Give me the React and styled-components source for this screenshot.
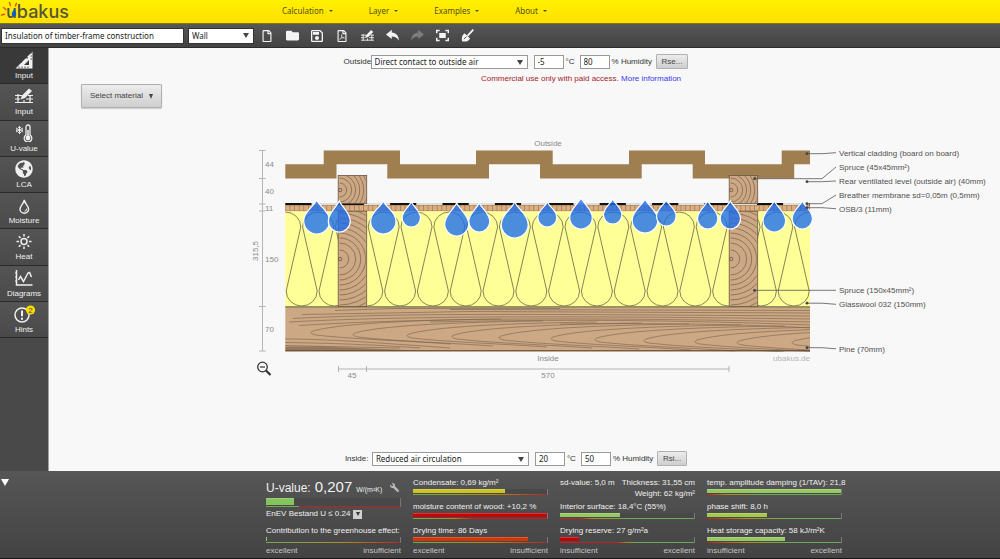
import React, { useState } from 'react';
import styled, { createGlobalStyle } from 'styled-components';
import { FaGlobeAmericas, FaRegFile, FaRegFilePdf, FaWrench, FaFolder } from 'react-icons/fa';
import { MdOutlineSave } from 'react-icons/md';

const GlobalStyle = createGlobalStyle`
  * {
    box-sizing: border-box;
  }

  body {
    margin: 0;
    font-family: 'Liberation Sans', Arial, sans-serif;
    font-size: 8px;
    line-height: 12px;
    color: #333;
    background: #f8f8f8;
  }

  button, input, select {
    font: inherit;
    color: inherit;
    margin: 0;
  }

  a {
    color: inherit;
    text-decoration: none;
  }
`;

const Page = styled.div`
  min-height: 100vh;
  display: flex;
  flex-direction: column;
`;

const Header = styled.header`
  height: 24px;
  display: flex;
  align-items: center;
  background: linear-gradient(#fff000, #ffe000);
  border-bottom: 1px solid #857600;
`;

const Logo = styled.a`
  width: 282px;
  display: block;

  svg {
    display: block;
  }
`;

const Nav = styled.nav`
  display: flex;
  gap: 36px;
  font-family: 'Noto Sans', sans-serif;
  color: #55500a;

  a {
    display: flex;
    align-items: center;
    gap: 5px;
    padding-bottom: 2px;
  }

  a::after {
    content: '';
    border: 2px solid transparent;
    border-top-color: #55500a;
    border-bottom: 0;
  }
`;

const Toolbar = styled.div`
  height: 24px;
  display: flex;
  align-items: center;
  padding-left: 1px;
  background: linear-gradient(#565656, #434343);
  border-bottom: 1px solid #2c2c2c;
`;

const TextInput = styled.input`
  width: ${props => props.$width}px;
  height: ${props => props.$height || 14}px;
  padding: 0 3px;
  border: 1px solid ${props => props.$border || '#999'};
  border-radius: 0;
  background: #fff;
  color: #222;
  font-family: 'Noto Sans', sans-serif;
`;

const SelectWrap = styled.span`
  position: relative;
  display: inline-flex;
  margin-left: ${props => props.$gap || 0}px;

  &::after {
    content: '';
    position: absolute;
    right: 5px;
    top: 5px;
    border: 3px solid transparent;
    border-top: 5px solid #444;
    border-bottom: 0;
    pointer-events: none;
  }
`;

const Select = styled.select`
  appearance: none;
  width: ${props => props.$width}px;
  height: ${props => props.$height || 14}px;
  padding: 0 3px;
  border: 1px solid ${props => props.$border || '#999'};
  border-radius: 0;
  background: #fff;
  color: #222;
  font-family: 'Noto Sans', sans-serif;
`;

const Tools = styled.div`
  display: flex;
  gap: 9px;
  margin-left: 5px;
`;

const ToolButton = styled.button`
  width: 16px;
  height: 16px;
  padding: 0;
  border: 0;
  background: none;
  display: flex;
  align-items: center;
  justify-content: center;
  color: ${props => (props.disabled ? '#7c7c7c' : '#f4f4f4')};
`;

const Body = styled.div`
  flex: 1;
  display: flex;
`;

const Sidebar = styled.nav`
  width: 49px;
  flex: none;
  background: #494949;
  border-right: 1px solid #a0a0a0;
`;

const SideList = styled.div`
  height: 290px;
  display: grid;
  grid-auto-rows: 1fr;
`;

const SideItem = styled.a`
  display: flex;
  flex-direction: column;
  align-items: center;
  padding-top: 3px;
  color: #f0f0f0;
  background: ${props => (props.$active ? '#393939' : 'linear-gradient(#545454, #4a4a4a)')};
  border-bottom: 1px solid #2a2a2a;

  svg {
    display: block;
    margin-bottom: 1px;
  }
`;

const Workspace = styled.main`
  flex: 1;
  min-width: 0;
  display: flex;
  flex-direction: column;
  padding: 6px 0 5px;
`;

const ClimateRow = styled.form`
  display: flex;
  align-items: center;
  justify-content: center;
  padding-right: 17px;
  height: 15px;
  margin-top: ${props => (props.$bottom ? 'auto' : '0')};

  label {
    white-space: nowrap;
  }
`;

const RowLabel = styled.label`
  width: 27px;
`;

const Unit = styled.label`
  width: ${props => props.$width}px;
  padding-left: 2px;
`;

const SpacedInput = styled(TextInput)`
  margin-left: ${props => props.$gap || 0}px;
`;

const GreyButton = styled.button`
  height: ${props => (props.$large ? 24 : 15)}px;
  padding: 0 ${props => (props.$large ? 8 : 5)}px;
  border: 1px solid #b0b0b0;
  border-radius: 1px;
  background: linear-gradient(#ececec, #cfcfcf);
  color: #444;
  white-space: nowrap;
`;

const MaterialButton = styled(GreyButton)`
  align-self: flex-start;
  margin: 0 32px;
  display: flex;
  align-items: center;
  gap: 6px;
  box-shadow: 0 1px 1px #ccc;

  &::after {
    content: '';
    border: 2px solid transparent;
    border-top: 5px solid #444;
    border-bottom: 0;
  }
`;

const Notice = styled.p`
  margin: 4px 0 0;
  padding-left: 113px;
  height: 11px;
  line-height: 12px;
  text-align: center;
  color: #a42428;

  a {
    color: #3838e8;
  }
`;

const Drawing = styled.svg`
  display: block;
  width: 100%;
  height: auto;
  font-family: 'Liberation Sans', Arial, sans-serif;
  font-size: 8px;
`;

const Footer = styled.footer`
  display: flex;
  background: linear-gradient(#565656, #434343);
  border-bottom: 1px solid #161616;
  color: #f0f0f0;
`;

const CollapseArea = styled.div`
  width: 108px;
  flex: none;
  padding-top: 8px;
`;

const CollapseButton = styled.button`
  display: block;
  margin: 0 1px;
  padding: 0;
  background: none;
  border: 4px solid transparent;
  border-top: 7px solid #fff;
  border-bottom: 0;
`;

const Results = styled.div`
  flex: 1;
  display: grid;
  grid-template-columns: repeat(4, 135px);
  gap: 12px;
  justify-content: center;
  padding: 6px 0 1px;
`;

const Column = styled.section`
  white-space: nowrap;
`;

const Bar = styled.div`
  height: ${props => (props.$tall ? 9 : 6)}px;
  display: flex;
  flex-direction: column;
  background: #484848;
  border-right: 1px solid #777;
`;

const Fill = styled.div`
  flex: 1;
  background: ${props => props.$color};
  box-shadow: inset 0 1px 0 rgba(255, 255, 255, 0.2);
`;

const Scale = styled.div`
  flex: none;
  height: 1px;
  margin-top: 1px;
  background: linear-gradient(to right, ${props => props.$stops});
`;

const MetricBox = styled.div`
  margin-bottom: 6px;
`;

const ScaleLabels = styled.div`
  display: flex;
  justify-content: space-between;
  margin-top: -4px;
  color: #c4c4c4;
`;

const UValue = styled.div`
  height: 21px;
  display: flex;
  align-items: baseline;
  line-height: 19px;
  font-size: 12px;

  strong {
    font-weight: normal;
    font-size: 15px;
    margin: 0 4px;
  }

  small {
    font-size: 7px;
  }

  svg {
    margin-left: auto;
    margin-right: 2px;
    align-self: center;
    transform: scaleX(-1);
    color: #bbb;
  }
`;

const Standard = styled.div`
  display: flex;
  align-items: center;
  gap: 3px;
  height: 14px;
  margin-bottom: 4px;
`;

const StandardButton = styled.button`
  width: 9px;
  height: 9px;
  padding: 0;
  border: 0;
  background: #d0d0d0;
  display: flex;
  align-items: center;
  justify-content: center;

  &::after {
    content: '';
    border: 2px solid transparent;
    border-top: 4px solid #333;
    border-bottom: 0;
  }
`;

const Facts = styled.div`
  height: 24px;
  line-height: 11px;
  display: flex;
  justify-content: space-between;
  text-align: right;
`;

const good = '#6fa858';
const mid = '#b08a20';
const bad = '#b82424';
const rising = `${good}, ${mid} 60%, ${bad}`;
const green = '#96c860';

// Insulation: one continuous wave of rounded loops
function wavePath() {
  let d = 'M269.8 227';
  for (let i = 0; i < 17; i++) {
    const top = 285.3 + i * 32.8;
    const bottom = top + 16.4;
    d += ` A15.5 15 0 0 1 ${top + 15.5} 227 L${bottom - 15.5} 291`;
    d += ` A15.5 15 0 0 0 ${bottom + 15.5} 291 L${bottom + 0.9} 227`;
  }
  return d;
}

const drops = [
  [316.7, 200, 234, 13], [339.3, 201, 232, 11], [383.3, 201, 234, 12.7], [411.3, 202, 227, 9.2],
  [456.7, 203, 236, 12], [479.3, 203, 232, 10.5], [514.7, 202, 238, 13.5], [547.3, 202, 227, 9.5],
  [581, 198, 229, 11.3], [612.7, 199, 224, 9.2], [645, 199, 233, 12.8], [666.3, 200, 226, 9.8],
  [707.7, 201, 229, 10.2], [730.3, 201, 229, 10.2], [774.3, 201, 232, 11.3], [802.3, 201, 229, 10.2],
];

const callouts = [
  ['Vertical cladding (board on board)', 807, 153.7, 152.7, 153],
  ['Spruce (45x45mm²)', 754.5, 178.7, 167, 167],
  ['Rear ventilated level (outside air) (40mm)', 807, 181.7, 181, 181],
  ['Breather membrane sd=0,05m (0,5mm)', 807, 203.7, 195, 195],
  ['OSB/3 (11mm)', 807, 207.7, 208.7, 209],
  ['Spruce (150x45mm²)', 754.5, 290.3, 290.3, 290],
  ['Glasswool 032 (150mm)', 807, 303.2, 304.3, 304],
  ['Pine (70mm)', 807, 347.7, 348.8, 349],
];

const knots = [
  [311, 333], [353, 335], [407, 336], [452, 337], [499, 338], [551, 339], [595, 340], [644, 341], [695, 342], [737, 343], [792, 343],
];

function Drop({ x, top, bottom, r }) {
  const cy = bottom - r;
  const d = `M${x} ${top} C${x + r * 0.25} ${top + r * 0.55} ${x + r} ${cy - r * 0.75} ${x + r} ${cy}
    A${r} ${r} 0 0 1 ${x - r} ${cy} C${x - r} ${cy - r * 0.75} ${x - r * 0.25} ${top + r * 0.55} ${x} ${top}Z`;
  return <path d={d} fill="#186cf0" fillOpacity="0.78" stroke="#fff" strokeWidth="1.2" />;
}

function Post({ x, y, height, cy, id }) {
  const rings = height > 50 ? [9, 16, 21, 26, 31, 36, 41, 46, 51] : [7, 12, 16, 20, 24, 28, 32];
  return (
    <g stroke="#6c5644" strokeWidth="0.8" fill="none">
      <clipPath id={id}>
        <rect x={x + 1.5} y={y} width={26} height={height} />
      </clipPath>
      <rect x={x} y={y} width={28.5} height={height} fill="#cda884" />
      <g clipPath={`url(#${id})`} strokeOpacity="0.8">
        {rings.map(r => <circle key={r} cx={x + 1.5} cy={cy} r={r} />)}
      </g>
      <circle cx={x + 2} cy={cy} r="1.7" />
    </g>
  );
}

function WallSection() {
  return (
    <Drawing viewBox="49 108 951 280" role="img" aria-label="Wall cross section">
      <clipPath id="wall"><rect x="285.3" y="205" width="524.7" height="147" /></clipPath>

      {/* Cladding */}
      <path fill="#9f7e50" d="M285.3 164.2H323.7V150.4H400V164.2H476V150.4H552.7V164.2H629V150.4H705V164.2H781.7V150.4H810V164.2H794.2V178.4H692.7V164.2H641.7V178.4H540V164.2H489V178.4H387.3V164.2H336.5V178.4H285.3Z" />

      {/* Membrane */}
      <path d="M285.3 204H810" stroke="#dedede" strokeWidth="2" />
      <path d="M285.3 204H810" stroke="#111" strokeWidth="1.8" strokeDasharray="26.2 26.2" />

      <g clipPath="url(#wall)">
        <rect x="285" y="205" width="526" height="6.2" fill="#dcad80" />
        <path d="M285 208H810" stroke="#a87c56" strokeWidth="6" strokeDasharray="0.8 3.8" />
        <path d="M285 205.2H810M285 211H810" stroke="#8f7450" strokeWidth="0.6" />
        <rect x="285" y="211.3" width="526" height="95.4" fill="#ffff98" />
        <path d={wavePath()} fill="none" stroke="#77764e" strokeWidth="0.9" />

        {/* Pine boards */}
        <rect x="285" y="306.7" width="526" height="45" fill="#cda884" />
        <g fill="none" stroke="#77604c" strokeWidth="0.7" strokeOpacity="0.85">
          <path d="M335 310.5L394 308.5H560M450 309.5L811 310.5M302 314.5L470 311.5L811 313M293 318.5C400 313 520 314 811 316M289 322C400 316 560 315.5 811 319M299 325.5C420 318 580 317 811 322M430 322C560 319 680 320 811 325M560 324C660 323 740 324 811 328" />
          {knots.map(([x, y]) => (
            <path key={x} d={`M${x + 190} ${y - 14}C${x + 110} ${y - 13} ${x + 30} ${y - 10} ${x + 2} ${y - 2}C${x - 2} ${y} ${x + 1} ${y + 1} ${x + 5} ${y + 2}C${x + 40} ${y + 6} ${x + 80} ${y + 7} ${x + 140} ${y + 11}`} />
          ))}
          <path d="M285 339C330 339 380 343 450 348M285 342.5C330 343 380 345 420 348M285 345.5L400 348" />
        </g>
        <path d="M285 346.5H320L420 350.5H285Z" fill="#5d4a3a" fillOpacity="0.5" />
        <path d="M285 350.7H810" stroke="#5d4a3a" strokeWidth="1" />
        <path d="M285 306.8H810" stroke="#77774a" strokeWidth="1.2" />
      </g>

      <Post id="p1" x={338.2} y={175.4} height={28} cy={190} />
      <Post id="p2" x={338.2} y={211.3} height={95.2} cy={259} />
      <Post id="p3" x={729.2} y={175.4} height={28} cy={190} />
      <Post id="p4" x={729.2} y={211.3} height={95.2} cy={259} />

      {drops.map(([x, top, bottom, r]) => <Drop key={x} x={x} top={top} bottom={bottom} r={r} />)}

      {/* Dimensions */}
      <g stroke="#b4b4b4" strokeWidth="1" fill="none">
        <path d="M262.5 150.5V351M259 150.5H265.5M259 178.5H265.5M259 204H265.5M259 211H265.5M259 306.5H265.5M259 351H265.5" />
        <path d="M338.5 369H729M338.5 366V372M366.5 366V372M729 366V372" />
      </g>
      <g fill="#8a8a8a">
        <text x="265" y="167">44</text>
        <text x="265" y="194">40</text>
        <text x="265" y="211">11</text>
        <text x="265" y="262">150</text>
        <text x="265" y="332">70</text>
        <text textAnchor="middle" transform="translate(258 251) rotate(-90)">315,5</text>
        <text x="352" y="378" textAnchor="middle">45</text>
        <text x="548" y="378" textAnchor="middle">570</text>
        <text x="548" y="146" textAnchor="middle">Outside</text>
        <text x="548" y="361" textAnchor="middle">Inside</text>
        <text x="810" y="361" textAnchor="end" fill="#b4b4b4">ubakus.de</text>
      </g>

      {callouts.map(([text, x, y, endY, textY]) => (
        <g key={text}>
          <path d={`M${x} ${y}H822L836 ${endY}`} fill="none" stroke="#555" strokeWidth="0.8" />
          <circle cx={x} cy={y} r="1.4" fill="#444" />
          <text x="839" y={textY + 3} fill="#505050">{text}</text>
        </g>
      ))}

      {/* Zoom out */}
      <g fill="none" stroke="#333">
        <circle cx="262.5" cy="367" r="4.8" strokeWidth="1.3" />
        <path d="M260 367H265" strokeWidth="1.2" />
        <path d="M266 370.5L270.5 375" strokeWidth="2.2" />
      </g>
    </Drawing>
  );
}

function UbakusLogo() {
  return (
    <svg width="80" height="23" viewBox="0 0 80 23" role="img" aria-label="ubakus">
      <g stroke="#e8501c" strokeWidth="1.4" strokeLinecap="round">
        <path d="M1.5 15L4.5 14.3M3.5 7.5L6 9.8M9.5 2.5L10.5 5.5M16.3 3.5L15.4 6" />
      </g>
      <text x="6" y="18" fontFamily="Inter, sans-serif" fontSize="18" fontWeight="500" fill="#56543c">ubakus</text>
      <path d="M14.6 8C14 10.5 11.6 12 11.6 14.2A2.3 2.3 0 0 0 16.2 14.2C16.2 12 15 10.5 14.6 8Z" fill="#0b5ec0" />
    </svg>
  );
}

function Icon({ size = 18, children }) {
  return (
    <svg width={size} height={size} viewBox="0 0 18 18" fill="none" stroke="currentColor" strokeWidth="1.5">
      {children}
    </svg>
  );
}

const PencilLines = ({ size }) => (
  <Icon size={size}>
    <path d="M0 8.5H7M0 12H5M0 15.5H18M13 8.5H18M11 12H18M3 7V16M9 13V16M15 8V16" strokeWidth="1.2" />
    <path d="M5.5 12.5L7 8.5L14 1.5L17 4L10 11Z" fill="currentColor" stroke="none" />
  </Icon>
);

const UndoArrow = () => (
  <Icon size={13}>
    <path d="M0 7.5L8 1V5C14 5.5 17.5 9.5 18 16C15.5 12 12.5 10.5 8 10.5V14Z" fill="currentColor" stroke="none" />
  </Icon>
);

const RedoArrow = () => (
  <Icon size={13}>
    <path d="M18 7.5L10 1V5C4 5.5 0.5 9.5 0 16C2.5 12 5.5 10.5 10 10.5V14Z" fill="currentColor" stroke="none" />
  </Icon>
);

const sideItems = [
  ['geometry', 'Input', (
    <Icon>
      <path d="M17.5 0.5V17.5H0.5ZM14 9L9 14H14Z" fill="currentColor" fillRule="evenodd" stroke="none" />
      <path d="M6 12A5 5 0 0 1 13 7" stroke="#393939" strokeWidth="1.2" />
      <path d="M17 2H15.5M17 5H15.5M17 8H15.5M4 17V15.5M7 17V15.5M10 17V15.5M13 17V15.5" stroke="#393939" strokeWidth="0.9" />
    </Icon>
  )],
  ['layers', 'Input', <PencilLines />],
  ['uvalue', 'U-value', (
    <Icon>
      <path d="M11 11V3A2 2 0 0 1 15 3V11A3.8 3.8 0 1 1 11 11Z" strokeWidth="1.3" />
      <circle cx="13" cy="14" r="2.4" fill="currentColor" stroke="none" />
      <path d="M13 6V13" />
      <path d="M4.5 2V10M1 4L8 8M8 4L1 8M3 3L4.5 4.3L6 3M3 9L4.5 7.7L6 9M1 5.8L2.5 6L1 7M8 5.8L6.5 6L8 7" strokeWidth="0.9" />
    </Icon>
  )],
  ['lca', 'LCA', <FaGlobeAmericas size={18} />],
  ['moisture', 'Moisture', (
    <Icon>
      <path d="M9.3 4C8.5 8 5 10 5 13A4.3 4.3 0 0 0 13.6 13C13.6 10 10.1 8 9.3 4Z" strokeWidth="1.4" />
      <path d="M9.5 15.2A2.3 2.3 0 0 0 11.6 12.6" strokeWidth="1" />
    </Icon>
  )],
  ['heat', 'Heat', (
    <Icon>
      <circle cx="9" cy="9.5" r="3" />
      <path d="M9 2V4.5M9 14.5V17M1.5 9.5H4M14 9.5H16.5M3.8 4.3L5.5 6M12.5 13L14.2 14.7M3.8 14.7L5.5 13M12.5 6L14.2 4.3" />
    </Icon>
  )],
  ['diagrams', 'Diagrams', (
    <Icon>
      <path d="M1.5 1V16H17.5" />
      <path d="M3.5 11L5.5 7.5L8.5 12.5L13 4L14.5 3.5L16.5 8" strokeWidth="1.5" />
      <path d="M0 4H1.5M0 8H1.5M0 12H1.5" strokeWidth="1" />
    </Icon>
  )],
  ['hints', 'Hints', (
    <svg width="24" height="18" viewBox="0 0 24 18" fill="none" stroke="currentColor">
      <circle cx="10" cy="10" r="7" strokeWidth="1.5" />
      <path d="M10 5.5V11.2M10 12.7V14.7" strokeWidth="2" />
      <circle cx="18.5" cy="5" r="4.6" fill="#ffdd00" stroke="none" />
      <text x="18.5" y="8" fontSize="8" textAnchor="middle" fill="#444" stroke="none">2</text>
    </svg>
  )],
];

function Metric({ label, value, color, stops }) {
  return (
    <MetricBox>
      <div>{label}</div>
      <Bar>
        <Fill $color={color} style={{ width: `${value}%` }} />
        <Scale $stops={stops} />
      </Bar>
    </MetricBox>
  );
}

function Climate({ id, label, surface, options, temperature, humidity, button, bottom }) {
  return (
    <ClimateRow $bottom={bottom} onSubmit={e => e.preventDefault()}>
      <RowLabel htmlFor={`${id}-surface`}>{label}</RowLabel>
      <SelectWrap>
        <Select id={`${id}-surface`} $width={157} defaultValue={surface}>
          {options.map(option => <option key={option}>{option}</option>)}
        </Select>
      </SelectWrap>
      <SpacedInput id={`${id}-temp`} $width={30} $gap={6} defaultValue={temperature} />
      <Unit htmlFor={`${id}-temp`} $width={16}>°C</Unit>
      <SpacedInput id={`${id}-hum`} $width={30} defaultValue={humidity} />
      <Unit htmlFor={`${id}-hum`} $width={46}>% Humidity</Unit>
      <GreyButton type="button">{button}</GreyButton>
    </ClimateRow>
  );
}

function App() {
  const [name, setName] = useState('Insulation of timber-frame construction');

  return (
    <Page>
      <GlobalStyle />
      <Header>
        <Logo href="#home"><UbakusLogo /></Logo>
        <Nav>
          <a href="#calculation">Calculation</a>
          <a href="#layer">Layer</a>
          <a href="#examples">Examples</a>
          <a href="#about">About</a>
        </Nav>
      </Header>

      <Toolbar>
        <TextInput aria-label="Name" $width={183} $height={16} $border="#333" value={name} onChange={e => setName(e.target.value)} />
        <SelectWrap $gap={4}>
          <Select aria-label="Component type" $width={66} $height={16} $border="#333" defaultValue="Wall">
            <option>Wall</option>
            <option>Roof</option>
            <option>Floor</option>
          </Select>
        </SelectWrap>
        <Tools>
          <ToolButton aria-label="New"><FaRegFile size={12} /></ToolButton>
          <ToolButton aria-label="Open"><FaFolder size={13} /></ToolButton>
          <ToolButton aria-label="Save"><MdOutlineSave size={16} /></ToolButton>
          <ToolButton aria-label="PDF"><FaRegFilePdf size={12} /></ToolButton>
          <ToolButton aria-label="Edit layers"><PencilLines size={13} /></ToolButton>
          <ToolButton aria-label="Undo"><UndoArrow /></ToolButton>
          <ToolButton aria-label="Redo" disabled><RedoArrow /></ToolButton>
          <ToolButton aria-label="Fit to screen">
            <Icon size={13}>
              <path d="M1 6V2H5M13 2H17V6M17 12V16H13M5 16H1V12" strokeWidth="2" />
              <rect x="4.5" y="5.5" width="9" height="7" fill="currentColor" stroke="none" />
            </Icon>
          </ToolButton>
          <ToolButton aria-label="Clean">
            <Icon size={13}>
              <path d="M17 1L9 9.5" strokeWidth="2.6" />
              <path d="M5 6L12.5 13C10.5 17 6 18 1.5 17C0.5 12.5 1.5 8 5 6Z" fill="currentColor" stroke="none" />
              <path d="M4 14L7.5 10.5" stroke="#4c4c4c" strokeWidth="1.3" />
            </Icon>
          </ToolButton>
        </Tools>
      </Toolbar>

      <Body>
        <Sidebar>
          <SideList>
            {sideItems.map(([id, label, icon], i) => (
              <SideItem key={id} href={`#${id}`} $active={i === 0}>
                {icon}
                {label}
              </SideItem>
            ))}
          </SideList>
        </Sidebar>

        <Workspace>
          <Climate
            id="outside"
            label="Outside"
            surface="Direct contact to outside air"
            options={['Direct contact to outside air', 'Rear ventilated', 'Ground']}
            temperature="-5"
            humidity="80"
            button="Rse..."
          />
          <Notice>
            Commercial use only with paid access. <a href="#access">More information</a>
          </Notice>
          <MaterialButton $large>Select material</MaterialButton>
          <WallSection />
          <Climate
            id="inside"
            label="Inside:"
            surface="Reduced air circulation"
            options={['Reduced air circulation', 'Normal air circulation']}
            temperature="20"
            humidity="50"
            button="Rsi..."
            bottom
          />
        </Workspace>
      </Body>

      <Footer>
        <CollapseArea>
          <CollapseButton aria-label="Hide results" />
        </CollapseArea>
        <Results>
          <Column>
            <UValue>
              U-value: <strong>0,207</strong> <small>W/(m²K)</small>
              <FaWrench size={9} />
            </UValue>
            <Bar $tall>
              <Fill $color="#84c45c" style={{ width: '21%' }} />
              <Scale $stops={`${good} 24%, ${bad} 25%`} />
            </Bar>
            <Standard>
              EnEV Bestand U ≤ 0.24
              <StandardButton aria-label="Choose standard" />
            </Standard>
            <Metric label="Contribution to the greenhouse effect:" value={1} color={green} stops={rising} />
            <ScaleLabels><span>excellent</span><span>insufficient</span></ScaleLabels>
          </Column>
          <Column>
            <Metric label="Condensate: 0,69 kg/m²" value={69} color="#cec41c" stops={rising} />
            <Metric label="moisture content of wood: +10,2 %" value={100} color="#d00000" stops={`${good}, ${mid} 30%, ${bad} 45%`} />
            <Metric label="Drying time: 86 Days" value={86} color="#d63400" stops={rising} />
            <ScaleLabels><span>excellent</span><span>insufficient</span></ScaleLabels>
          </Column>
          <Column>
            <Facts>
              <span>sd-value: 5,0 m</span>
              <span>Thickness: 31,55 cm<br />Weight: 62 kg/m²</span>
            </Facts>
            <Metric label="Interior surface: 18,4°C (55%)" value={45} color={green} stops={`${bad} 15%, ${mid} 25%, ${good} 50%`} />
            <Metric label="Drying reserve: 27 g/m²a" value={14} color="#c80000" stops={`${bad} 42%, ${mid} 50%, ${good} 58%`} />
            <ScaleLabels><span>insufficient</span><span>excellent</span></ScaleLabels>
          </Column>
          <Column>
            <Metric label="temp. amplitude damping (1/TAV): 21,8" value={100} color={green} stops={`${bad}, ${mid} 15%, ${good} 40%`} />
            <Metric label="phase shift: 8,0 h" value={45} color="#a4c848" stops={`${bad}, ${mid} 30%, ${good} 60%`} />
            <Metric label="Heat storage capacity: 58 kJ/m²K" value={58} color={green} stops={`${bad}, ${mid} 30%, ${good} 60%`} />
            <ScaleLabels><span>insufficient</span><span>excellent</span></ScaleLabels>
          </Column>
        </Results>
      </Footer>
    </Page>
  );
}

export default App;
